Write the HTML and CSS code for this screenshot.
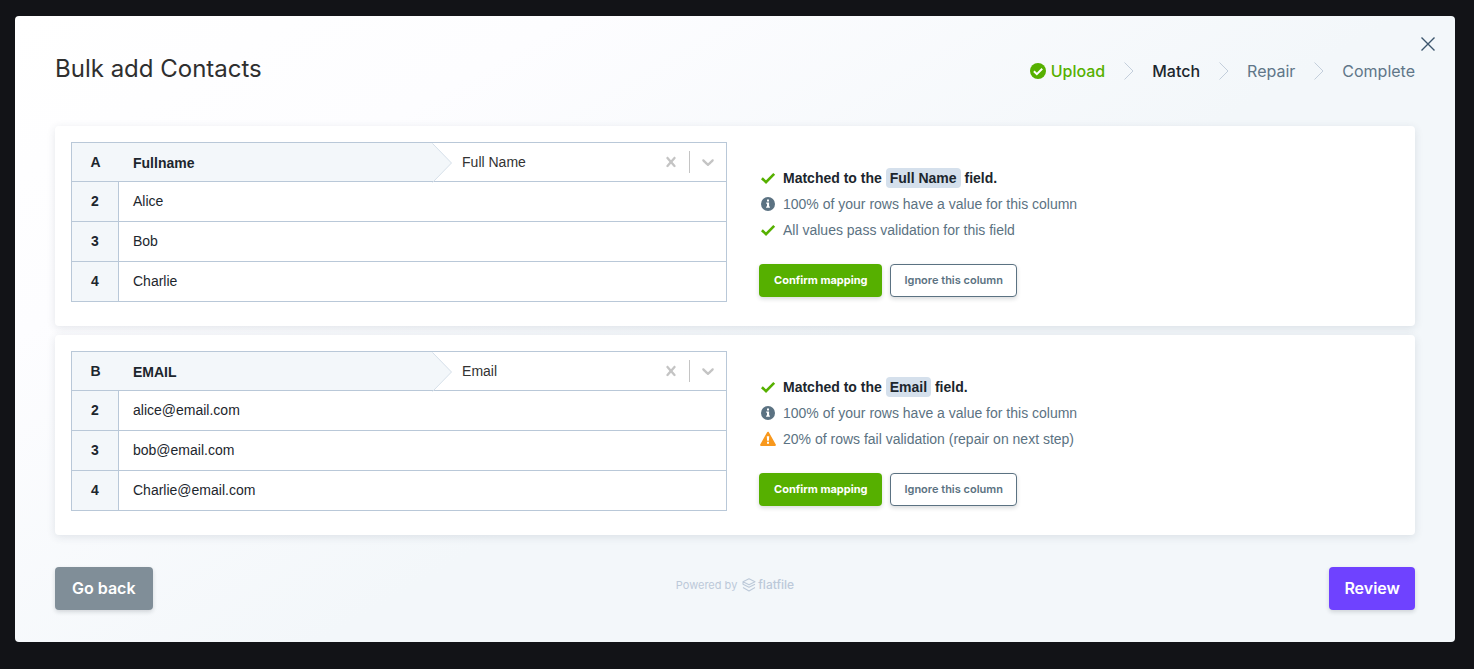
FILE: index.html
```html
<!DOCTYPE html>
<html lang="en">
<head>
  <meta charset="UTF-8">
  <meta name="viewport" content="width=device-width, initial-scale=1.0">
  <title>Bulk add Contacts</title>
  <link rel="stylesheet" href="styles.css">
</head>
<body>
  <!-- shared icons -->
  <svg class="sprite" aria-hidden="true">
    <symbol id="check" viewBox="0 0 16 16">
      <path d="M1.9 8.2 L6 12.2 L14.2 3.8" fill="none" stroke="currentColor" stroke-width="2.6"/>
    </symbol>
    <symbol id="info" viewBox="0 0 16 16">
      <circle cx="8" cy="8" r="7" fill="currentColor"/>
      <path d="M7 3.6h2v2H7zM6.2 6.6h2.9v4h.8v1.2H6.1v-1.2h.9V7.8h-.8z" fill="#fff"/>
    </symbol>
    <symbol id="warning" viewBox="0 0 16 16">
      <path d="M8 1.7 L14.9 14 H1.1 Z" fill="currentColor" stroke="currentColor" stroke-width="2" stroke-linejoin="round"/>
      <path d="M6.800 5.2h2.400l-.3 4.5H7.100zM7 10.800h2v2H7z" fill="#fff"/>
    </symbol>
    <symbol id="step-arrow" viewBox="0 0 10 18">
      <path d="M.5 .5 L9 9 L.5 17.500" fill="none" stroke="currentColor"/>
    </symbol>
    <symbol id="clear" viewBox="0 0 20 20">
      <path d="M14.348 14.849c-0.469 0.469-1.229 0.469-1.697 0l-2.651-3.030-2.651 3.029c-0.469 0.469-1.229 0.469-1.697 0-0.469-0.469-0.469-1.229 0-1.697l2.758-3.150-2.759-3.152c-0.469-0.469-0.469-1.228 0-1.697s1.228-0.469 1.697 0l2.652 3.031 2.651-3.031c0.469-0.469 1.228-0.469 1.697 0s0.469 1.229 0 1.697l-2.758 3.152 2.758 3.150c0.469 0.469 0.469 1.229 0 1.698z" fill="currentColor"/>
    </symbol>
    <symbol id="chevron" viewBox="0 0 20 20">
      <path d="M4.516 7.548c0.436-0.446 1.043-0.481 1.576 0l3.908 3.747 3.908-3.747c0.533-0.481 1.141-0.446 1.574 0 0.436 0.445 0.408 1.197 0 1.615-0.406 0.418-4.695 4.502-4.695 4.502-0.217 0.223-0.502 0.335-0.787 0.335s-0.570-0.112-0.789-0.335c0 0-4.287-4.084-4.695-4.502s-0.436-1.170 0-1.615z" fill="currentColor"/>
    </symbol>
    <symbol id="arrow" viewBox="0 0 20 40">
      <path d="M0 0 H.5 L19.500 20 L1.500 38 H0 Z" fill="#f3f7fa"/>
      <path d="M.5 .5 L19.500 20 L.5 39.500" fill="none" stroke="#d5dfe9"/>
    </symbol>
  </svg>

  <main class="modal">
    <button class="close" type="button" aria-label="Close">
      <svg viewBox="0 0 14 14"><path d="M.5 .5 L13.500 13.500 M13.500 .5 L.5 13.500" stroke="currentColor" stroke-width="1.4"/></svg>
    </button>

    <header class="header">
      <h1>Bulk add Contacts</h1>
      <ol class="steps">
        <li class="done">
          <svg class="step-check" viewBox="0 0 16 16"><circle cx="8" cy="8" r="8" fill="currentColor"/><path d="M3.900 8.300 L6.800 11.100 L12.200 5.700" fill="none" stroke="#fff" stroke-width="2"/></svg>
          Upload
        </li>
        <li class="active"><svg class="step-arrow"><use href="#step-arrow"/></svg>Match</li>
        <li><svg class="step-arrow"><use href="#step-arrow"/></svg>Repair</li>
        <li><svg class="step-arrow"><use href="#step-arrow"/></svg>Complete</li>
      </ol>
    </header>

    <section class="card">
      <table class="preview">
        <thead>
          <tr>
            <th class="num">A</th>
            <th class="head">
              <div class="mapping">
                <label class="column-name" for="field-a">Fullname</label>
                <svg class="arrow"><use href="#arrow"/></svg>
                <div class="picker">
                  <select id="field-a">
                    <option selected>Full Name</option>
                    <option>Email</option>
                  </select>
                  <div class="indicators">
                    <button class="clear" type="button" aria-label="Clear"><svg><use href="#clear"/></svg></button>
                    <span class="divider"></span>
                    <svg class="chevron"><use href="#chevron"/></svg>
                  </div>
                </div>
              </div>
            </th>
          </tr>
        </thead>
        <tbody>
          <tr><th class="num">2</th><td>Alice</td></tr>
          <tr><th class="num">3</th><td>Bob</td></tr>
          <tr><th class="num">4</th><td>Charlie</td></tr>
        </tbody>
      </table>
      <div class="status">
        <ul class="checks">
          <li class="matched"><svg class="green"><use href="#check"/></svg><span>Matched to the <mark>Full Name</mark> field.</span></li>
          <li><svg><use href="#info"/></svg>100% of your rows have a value for this column</li>
          <li><svg class="green"><use href="#check"/></svg>All values pass validation for this field</li>
        </ul>
        <div class="actions">
          <button class="btn small confirm" type="button">Confirm mapping</button>
          <button class="btn small ignore" type="button">Ignore this column</button>
        </div>
      </div>
    </section>

    <section class="card">
      <table class="preview">
        <thead>
          <tr>
            <th class="num">B</th>
            <th class="head">
              <div class="mapping">
                <label class="column-name" for="field-b">EMAIL</label>
                <svg class="arrow"><use href="#arrow"/></svg>
                <div class="picker">
                  <select id="field-b">
                    <option>Full Name</option>
                    <option selected>Email</option>
                  </select>
                  <div class="indicators">
                    <button class="clear" type="button" aria-label="Clear"><svg><use href="#clear"/></svg></button>
                    <span class="divider"></span>
                    <svg class="chevron"><use href="#chevron"/></svg>
                  </div>
                </div>
              </div>
            </th>
          </tr>
        </thead>
        <tbody>
          <tr><th class="num">2</th><td>alice@email.com</td></tr>
          <tr><th class="num">3</th><td>bob@email.com</td></tr>
          <tr><th class="num">4</th><td>Charlie@email.com</td></tr>
        </tbody>
      </table>
      <div class="status">
        <ul class="checks">
          <li class="matched"><svg class="green"><use href="#check"/></svg><span>Matched to the <mark>Email</mark> field.</span></li>
          <li><svg><use href="#info"/></svg>100% of your rows have a value for this column</li>
          <li><svg class="orange"><use href="#warning"/></svg>20% of rows fail validation (repair on next step)</li>
        </ul>
        <div class="actions">
          <button class="btn small confirm" type="button">Confirm mapping</button>
          <button class="btn small ignore" type="button">Ignore this column</button>
        </div>
      </div>
    </section>

    <footer class="footer">
      <button class="btn back" type="button">Go back</button>
      <div class="powered">
        Powered by
        <svg viewBox="0 0 14 14"><path d="M7 .8 L13 3.800 L7 6.800 L1 3.800 Z M1 3.800 V6.200 L7 9.200 L13 6.200 M1 9.600 L7 12.900 L13 9.600" fill="none" stroke="currentColor" stroke-width="1.1" stroke-linejoin="round"/></svg>
        <span class="brand">flatfile</span>
      </div>
      <button class="btn review" type="button">Review</button>
    </footer>
  </main>
</body>
</html>
```
FILE: styles.css
```css
* {
  box-sizing: border-box;
}
body {
  margin: 0;
  padding: 16px 19px 27px 15px;
  background: #121317;
  color: #1c262d;
  font-family: "Liberation Sans", Arial, sans-serif;
  font-size: 14px;
  line-height: 20px;
}
.header, .footer, .btn {
  font-family: Inter, "Liberation Sans", sans-serif;
}
.sprite {
  position: absolute;
  width: 0;
  height: 0;
}
.modal {
  position: relative;
  padding: 36px 40px 32px;
  border-radius: 4px;
  background: linear-gradient(150deg, #fff 0%, #fdfdff 22%, #f3f7fa 55%);
}
.close {
  position: absolute;
  top: 16px;
  right: 15px;
  width: 24px;
  height: 24px;
  padding: 5px;
  border: 0;
  background: none;
  color: #3c556d;
  cursor: pointer;
}
.close svg {
  display: block;
  width: 14px;
  height: 14px;
}

/* header */
.header {
  display: flex;
  justify-content: space-between;
  margin-bottom: 40px;
}
h1 {
  margin: 0;
  color: #2f2f2f;
  font-size: 24px;
  font-weight: 400;
  line-height: 34px;
}
.steps {
  display: flex;
  align-items: center;
  margin: 0;
  padding: 4px 0 0;
  list-style: none;
  color: #607688;
  font-size: 16px;
  line-height: 24px;
}
.steps li {
  display: flex;
  align-items: center;
}
.steps .done {
  color: #56b000;
  font-weight: 500;
}
.steps .active {
  color: #1c262d;
  font-weight: 500;
}
.step-check {
  width: 16px;
  height: 16px;
  margin-right: 5px;
}
.step-arrow {
  width: 10px;
  height: 18px;
  margin: 0 18px 0 19px;
  color: #c3cedb;
}

/* cards */
.card {
  display: grid;
  grid-template-columns: 1fr 1fr;
  align-items: start;
  gap: 16px;
  margin-bottom: 9px;
  padding: 16px 16px 24px;
  border-radius: 4px;
  background: #fff;
  box-shadow: 0 2px 8px rgba(40, 60, 80, 0.12);
}
.preview {
  width: 100%;
  border: 1px solid #b9c8d8;
  border-collapse: separate;
  border-spacing: 0;
  table-layout: fixed;
}
.preview th, .preview td {
  height: 40px;
  padding: 0 14px 2px;
  text-align: left;
}
.preview tbody th, .preview tbody td {
  border-top: 1px solid #b9c8d8;
}
.preview thead th {
  height: 38px;
}
.preview .num {
  width: 47px;
  padding: 0 0 2px;
  background: #f3f7fa;
  font-weight: 600;
  text-align: center;
}
.preview thead .num {
  padding: 0;
}
.preview tbody .num {
  border-right: 1px solid #b9c8d8;
}
.preview .head {
  padding: 0;
}
.mapping {
  display: grid;
  grid-template-columns: 8fr 20px 7fr;
  grid-template-rows: 38px;
}
.column-name {
  padding: 10px 14px 8px;
  background: #f3f7fa;
  font-weight: 600;
}
.arrow {
  width: 20px;
  height: 40px;
}
.picker {
  position: relative;
}
.picker select {
  width: 100%;
  height: 38px;
  padding: 0 76px 0 10px;
  border: 0;
  background: none;
  color: #333;
  font-family: inherit;
  font-size: 14px;
  appearance: none;
}
.indicators {
  position: absolute;
  top: 0;
  right: 0;
  display: flex;
  align-items: center;
  height: 38px;
  color: #c4c4c4;
  pointer-events: none;
}
.indicators svg {
  display: block;
  width: 20px;
  height: 20px;
}
.clear {
  padding: 0 8px;
  border: 0;
  background: none;
  color: inherit;
  cursor: pointer;
  pointer-events: auto;
}
.divider {
  width: 1px;
  height: 22px;
  background: #c4c4c4;
}
.chevron {
  margin: 0 8px;
}

/* match status */
.status {
  padding: 23px 16px 0;
}
.checks {
  margin: 0 0 21px;
  padding: 0;
  list-style: none;
  color: #5b7282;
  line-height: 26px;
}
.checks li {
  display: flex;
  align-items: center;
}
.checks svg {
  width: 16px;
  height: 16px;
  margin: 0 7px 0 1px;
}
.checks .matched {
  color: #1c262d;
  font-weight: 600;
}
.checks .green {
  color: #56b000;
}
.checks .orange {
  color: #f8981d;
}
mark {
  padding: 2px 4px;
  border-radius: 4px;
  background: #d5e0ec;
  color: inherit;
}
.actions {
  display: flex;
  gap: 8px;
}

/* buttons */
.btn {
  height: 43px;
  padding: 0 17px 2px;
  border: 0;
  border-radius: 4px;
  box-shadow: 0 2px 4px rgba(20, 30, 40, 0.16);
  color: #fff;
  font-size: 16px;
  font-weight: 600;
  cursor: pointer;
}
.small {
  height: 33px;
  padding: 0 13px 1px;
  font-size: 11px;
}
.confirm {
  padding: 0 15px 1px;
  background: #56b000;
  font-weight: 700;
}
.ignore {
  border: 1px solid #5b7282;
  background: #fff;
  color: #5b7282;
}
.back {
  justify-self: start;
  background: #808e98;
}
.review {
  justify-self: end;
  padding: 0 15px 2px;
  background: #6f42ff;
}

/* footer */
.footer {
  display: grid;
  grid-template-columns: 1fr auto 1fr;
  margin-top: 32px;
}
.powered {
  display: flex;
  align-items: center;
  height: 36px;
  color: #bcc9d9;
  font-size: 11px;
}
.powered svg {
  width: 14px;
  height: 14px;
  margin: 0 2px 0 5px;
}
.brand {
  font-size: 12px;
  font-weight: 500;
}
```
